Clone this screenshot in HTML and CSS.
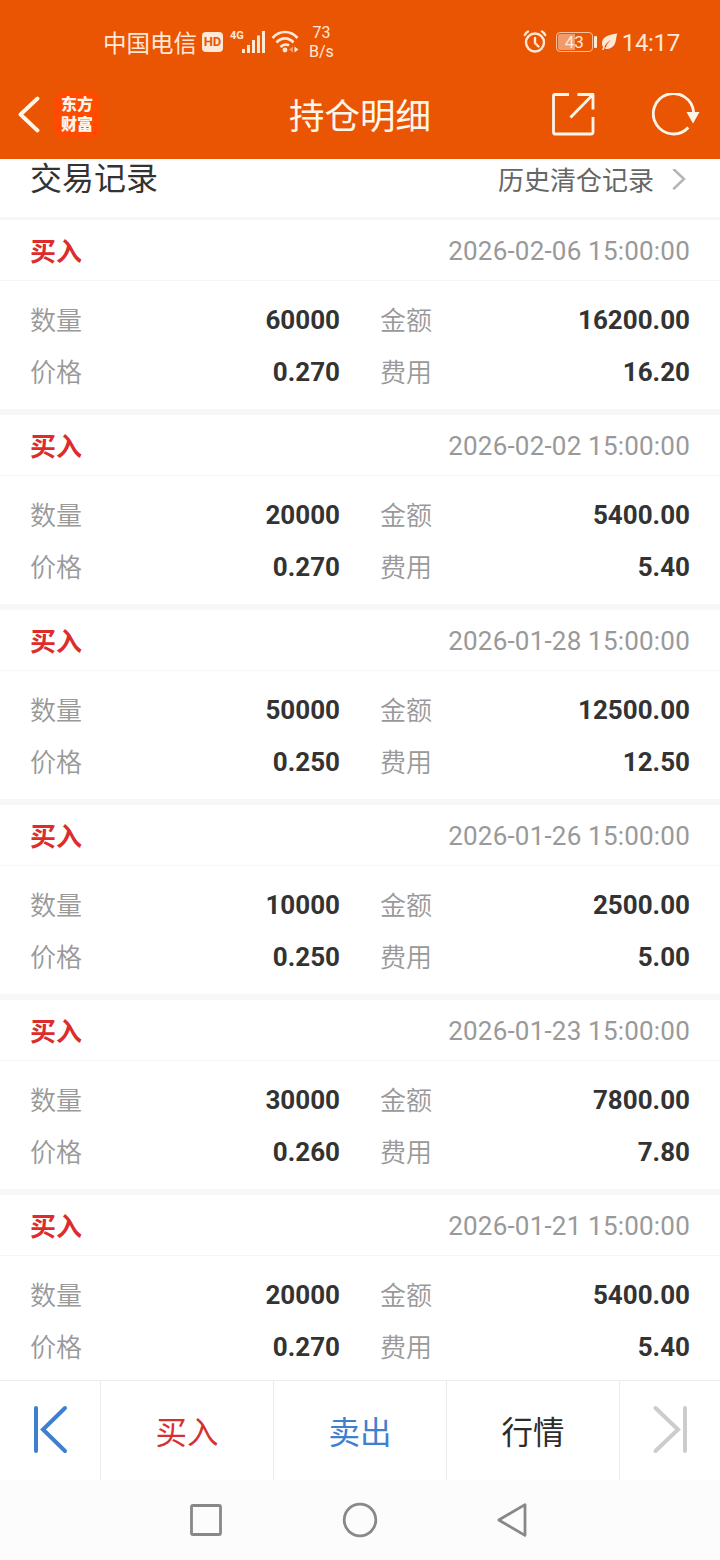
FILE: index.html
```html
<!DOCTYPE html>
<html lang="zh-CN">
<head>
<meta charset="utf-8">
<title>持仓明细</title>
<link rel="stylesheet" href="styles.css">
</head>
<body>
<div class="app">
  <header class="top">
    <div class="status">
      <div class="status-side">
        <span class="carrier">中国电信</span>
        <span class="hd">HD</span>
        <span class="net">4G</span>
        <svg class="signal" width="24" height="24" viewBox="0 0 24 24" fill="#ffe9d6"><rect x="0" y="19" width="3" height="4"/><rect x="5" y="15" width="3" height="8"/><rect x="10" y="10" width="3" height="13"/><rect x="15" y="5.500" width="3" height="17.500"/><rect x="20" y="1" width="3" height="22"/></svg>
        <svg class="wifi" width="29" height="24" viewBox="0 0 29 24" fill="none" stroke="#ffe9d6" stroke-width="2.700"><path d="M1.500 8C8.500 0 19.500 0 26.500 8M5.500 12.500C10.500 7 17.500 7 22.500 12.500M9.500 17C12.500 14 16 14 18 15.500"/><circle cx="14" cy="20" r="2.400" fill="#ffe9d6" stroke="none"/><path d="M22 16.500v6l-4-3z" fill="#f29a68" stroke="none"/><path d="M23.500 16.500v6l4-3z" fill="#ffe9d6" stroke="none"/></svg>
        <span class="speed"><span>73</span><span>B/s</span></span>
      </div>
      <div class="status-side status-right">
        <svg width="24" height="24" viewBox="0 0 24 24" fill="none" stroke="#ffe9d6" stroke-width="2.400" stroke-linecap="round"><circle cx="12" cy="12.500" r="9"/><path d="M12 8v5l3.500 3.500M1.800 5Q3 2.500 5 1.500M22.200 5Q21 2.500 19 1.500"/></svg>
        <span class="battery">43</span><span class="battery-cap"></span>
        <svg class="leaf" width="17" height="18" viewBox="0 0 17 18"><path d="M16.200 0.500C7 1.500 0.500 4.500 1 11Q1.200 13 2.500 14.500Q5 10 10 6.500Q5.500 11 4 15.700Q9 17 12.800 12.500C15.500 9 14.800 5 16.200 0.500ZM2.500 13L1 17h1.500L4 14Z" fill="#ffe9d6"/></svg>
        <span class="clock">14:17</span>
      </div>
    </div>
    <div class="titlebar">
      <div class="title-left">
        <svg width="24" height="38" viewBox="0 0 24 38" fill="none" stroke="#fff6ea" stroke-width="3.800" stroke-linecap="round" stroke-linejoin="round"><path d="M19.500 2.500L2.500 18.500L19.500 34.500"/></svg>
        <div class="logo"><span>东方</span><span>财富</span></div>
      </div>
      <h1 class="title">持仓明细</h1>
      <div class="title-right">
        <svg width="44" height="44" viewBox="0 0 44 44" fill="none" stroke="#fff6ea" stroke-width="2.800" stroke-linejoin="round"><path d="M18 1.500H4Q2.500 1.500 2.500 3V39Q2.500 41 4 41H40Q42 41 42 39V24M26.500 1.500H42V16.500M42 1.500L19.500 24.500"/></svg>
        <svg width="50" height="44" viewBox="0 0 50 44" fill="none" stroke="#fff6ea" stroke-width="2.800"><path d="M36.300 34.500A20.200 20.200 0 1 1 41.600 19"/><path d="M34.500 19H47.500L41 30.500Z" fill="#fff6ea" stroke="none"/></svg>
      </div>
    </div>
  </header>

  <main class="records">
    <div class="section-head">
      <h2 class="section-title">交易记录</h2>
      <a class="history">历史清仓记录<svg width="14" height="24" viewBox="0 0 14 24" fill="none" stroke="#b5b5b5" stroke-width="2.500" stroke-linecap="round"><path d="M2 0.500L12 10L2 19.500"/></svg></a>
    </div>

    <section class="card">
      <div class="card-head"><b class="side">买入</b><time class="time">2026-02-06 15:00:00</time></div>
      <dl class="facts">
        <div class="fact"><dt>数量</dt><dd>60000</dd></div><div class="fact"><dt>金额</dt><dd>16200.00</dd></div>
        <div class="fact"><dt>价格</dt><dd>0.270</dd></div><div class="fact"><dt>费用</dt><dd>16.20</dd></div>
      </dl>
    </section>
    <section class="card">
      <div class="card-head"><b class="side">买入</b><time class="time">2026-02-02 15:00:00</time></div>
      <dl class="facts">
        <div class="fact"><dt>数量</dt><dd>20000</dd></div><div class="fact"><dt>金额</dt><dd>5400.00</dd></div>
        <div class="fact"><dt>价格</dt><dd>0.270</dd></div><div class="fact"><dt>费用</dt><dd>5.40</dd></div>
      </dl>
    </section>
    <section class="card">
      <div class="card-head"><b class="side">买入</b><time class="time">2026-01-28 15:00:00</time></div>
      <dl class="facts">
        <div class="fact"><dt>数量</dt><dd>50000</dd></div><div class="fact"><dt>金额</dt><dd>12500.00</dd></div>
        <div class="fact"><dt>价格</dt><dd>0.250</dd></div><div class="fact"><dt>费用</dt><dd>12.50</dd></div>
      </dl>
    </section>
    <section class="card">
      <div class="card-head"><b class="side">买入</b><time class="time">2026-01-26 15:00:00</time></div>
      <dl class="facts">
        <div class="fact"><dt>数量</dt><dd>10000</dd></div><div class="fact"><dt>金额</dt><dd>2500.00</dd></div>
        <div class="fact"><dt>价格</dt><dd>0.250</dd></div><div class="fact"><dt>费用</dt><dd>5.00</dd></div>
      </dl>
    </section>
    <section class="card">
      <div class="card-head"><b class="side">买入</b><time class="time">2026-01-23 15:00:00</time></div>
      <dl class="facts">
        <div class="fact"><dt>数量</dt><dd>30000</dd></div><div class="fact"><dt>金额</dt><dd>7800.00</dd></div>
        <div class="fact"><dt>价格</dt><dd>0.260</dd></div><div class="fact"><dt>费用</dt><dd>7.80</dd></div>
      </dl>
    </section>
    <section class="card">
      <div class="card-head"><b class="side">买入</b><time class="time">2026-01-21 15:00:00</time></div>
      <dl class="facts">
        <div class="fact"><dt>数量</dt><dd>20000</dd></div><div class="fact"><dt>金额</dt><dd>5400.00</dd></div>
        <div class="fact"><dt>价格</dt><dd>0.270</dd></div><div class="fact"><dt>费用</dt><dd>5.40</dd></div>
      </dl>
    </section>
  </main>

  <nav class="actions">
    <div class="action"><svg width="36" height="50" viewBox="0 0 36 50" fill="none" stroke="#3f7fd0" stroke-width="4" stroke-linecap="round"><path d="M4 3V46M33 3L11 24.500L33 46"/></svg></div>
    <div class="action buy">买入</div>
    <div class="action sell">卖出</div>
    <div class="action quote">行情</div>
    <div class="action"><svg width="36" height="50" viewBox="0 0 36 50" fill="none" stroke="#cccccc" stroke-width="4" stroke-linecap="round"><path d="M33 3V46M3.500 3L26 24.500L3.500 46"/></svg></div>
  </nav>

  <footer class="sysnav">
    <svg width="36" height="36" viewBox="0 0 36 36" fill="none" stroke="#888" stroke-width="2.800"><rect x="3.500" y="3.500" width="29" height="29" rx="1.500"/></svg>
    <svg width="36" height="36" viewBox="0 0 36 36" fill="none" stroke="#888" stroke-width="2.800"><circle cx="18" cy="18" r="15.800"/></svg>
    <svg width="36" height="36" viewBox="0 0 36 36" fill="none" stroke="#888" stroke-width="2.800" stroke-linejoin="round"><path d="M29 2.600V33.400L2.800 18Z"/></svg>
  </footer>
</div>
</body>
</html>
```
FILE: styles.css
```css
* { box-sizing: border-box; }
body {
  margin: 0;
  font-family: Roboto, "Noto Sans CJK SC", sans-serif;
  color: #333;
  background: #fff;
}
h1, h2, dl, dd { margin: 0; font-weight: 400; }
.app { display: flex; flex-direction: column; width: 720px; height: 1560px; overflow: hidden; }

.top { flex: none; height: 159px; background: #ea5504; color: #fff6ea; }
.status {
  display: flex;
  justify-content: space-between;
  height: 70px;
  padding: 14px 40px 0 103px;
  color: #ffe9d6;
}
.status-side { display: flex; align-items: center; height: 56px; }
.carrier { font-size: 23.5px; width: 95px; white-space: nowrap; padding-bottom: 1px; }
.hd {
  width: 21px; height: 20px; margin-left: 4px;
  border-radius: 4px;
  background: #ffe9d6; color: #ea5504;
  font-size: 13px; font-weight: 700; line-height: 20px; text-align: center;
}
.net { width: 14px; margin: -13px 0 0 7px; font-size: 11px; font-weight: 700; line-height: 14px; }
.signal { margin-left: -2px; }
.wifi { margin-left: 5px; }
.speed { display: flex; flex-direction: column; margin-left: 9px; font-size: 16px; line-height: 19px; text-align: center; }
.battery {
  width: 37px; height: 20px; margin-left: 9px;
  border: 1.5px solid #f8c09c; border-radius: 4px;
  background: linear-gradient(to right, #f39a68 17px, transparent 17px) content-box;
  padding: 1px;
  font-size: 17px; line-height: 16px; text-align: center;
}
.battery-cap { width: 3px; height: 12px; margin-left: 1px; border-radius: 1px; background: #ffe9d6; }
.leaf { margin-left: 4px; }
.clock { margin-left: 4px; font-size: 24px; letter-spacing: -0.3px; padding-top: 1px; }

.titlebar { display: grid; grid-template-columns: 1fr auto 1fr; align-items: center; height: 89px; padding: 0 18px; }
.title-left { display: flex; align-items: center; gap: 12px; }
.logo {
  display: flex; flex-direction: column; align-items: center; justify-content: center;
  width: 46px; height: 46px;
  border-radius: 9px;
  background: #ff4a00;
  font-size: 16px; font-weight: 900; line-height: 20px;
}
.title { font-size: 35.5px; line-height: 52px; padding-top: 5px; }
.title-right { display: flex; justify-content: flex-end; gap: 57px; }

.records { flex: 1; min-height: 0; overflow: hidden; }
.section-head {
  display: flex; align-items: center; justify-content: space-between;
  height: 61px; padding: 0 34px 19px 30px;
  border-bottom: 3px solid #f7f7f8;
}
.section-title { font-size: 32px; line-height: 40px; }
.history { display: flex; align-items: center; gap: 18px; padding-top: 4px; font-size: 26px; line-height: 40px; color: #666; }
.card { height: 195px; border-bottom: 6px solid #f7f7f9; }
.card-head {
  display: flex; align-items: center; justify-content: space-between;
  height: 61px; padding: 0 30px;
  border-bottom: 1px solid #f6f6f6;
  font-size: 26px;
}
.side { color: #dd2c2c; padding-bottom: 2px; }
.time { color: #999; letter-spacing: 0.2px; padding-top: 2px; }
.facts { display: grid; grid-template-columns: 310px 310px; column-gap: 40px; padding: 13px 30px 11px; }
.fact { display: flex; align-items: center; justify-content: space-between; height: 52px; font-size: 26px; }
.fact dt { color: #999; font-weight: 350; padding-bottom: 3px; }
.fact dd { font-weight: 700; }

.actions {
  flex: none;
  display: grid; grid-template-columns: 100px 173px 173px 173px 101px;
  height: 100px;
  border-top: 1px solid #ebebeb;
}
.action { display: flex; align-items: center; justify-content: center; font-size: 31.5px; padding-bottom: 2px; }
.action + .action { border-left: 1px solid #ebebeb; }
.buy { color: #d63031; }
.sell { color: #3f7fd0; }
.quote { color: #2c2c2c; }

.sysnav { flex: none; display: flex; justify-content: center; align-items: center; gap: 118px; height: 80px; background: #fcfcfc; }
```
